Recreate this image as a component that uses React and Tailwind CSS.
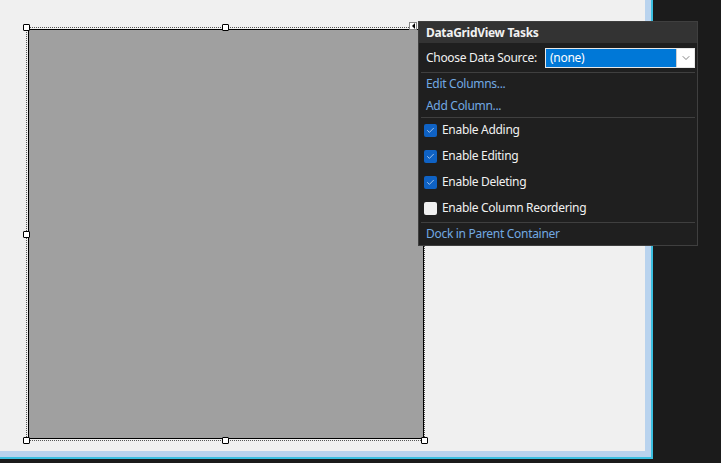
import { Check, ChevronDown } from "lucide-react";

const font = { fontFamily: '"Noto Sans", "Open Sans", sans-serif' };

function Handle({ className }) {
  return (
    <div
      className={`absolute h-[7px] w-[7px] rounded-[1px] border border-black bg-white ${className}`}
    />
  );
}

function Sep() {
  return <div className="mx-[2px] h-px bg-[#3f3f3f]" />;
}

function CheckRow({ label, checked }) {
  return (
    <div className="flex h-[22px] items-center gap-[5px] pl-[5px]">
      {checked ? (
        <div className="flex h-[13px] w-[13px] items-center justify-center rounded-[2px] bg-[#0f62c4]">
          <Check size={9} strokeWidth={2} className="text-[#cfe0f5]" />
        </div>
      ) : (
        <div className="h-[13px] w-[13px] rounded-[2px] bg-[#f0f0f0]" />
      )}
      <span className="text-[12px] tracking-[-0.3px] text-[#f1f1f1]">{label}</span>
    </div>
  );
}

export default function App() {
  return (
    <div className="relative h-[463px] w-[721px] overflow-hidden bg-[#1b1b1b]" style={font}>
      {/* designer form surface */}
      <div className="w-[653px] border-r-2 border-b-2 border-[#3bbfe0]">
        <div className="border-r-[6px] border-b-[6px] border-[#b9d3ee]">
          <div className="h-[451px] bg-[#f0f0f0] pt-[29px] pl-[28px]">
            <div className="h-[410px] w-[396px] border border-black bg-[#a0a0a0]" />
          </div>
        </div>
      </div>

      {/* selection frame */}
      <div className="absolute left-[26px] top-[27px] h-[414px] w-[399px] border border-dotted border-[#555]" />
      <Handle className="left-[23px] top-[24px]" />
      <Handle className="left-[222px] top-[24px]" />
      <Handle className="left-[23px] top-[231px]" />
      <Handle className="left-[23px] top-[437px]" />
      <Handle className="left-[222px] top-[437px]" />
      <Handle className="left-[421px] top-[437px]" />

      {/* smart tag glyph */}
      <div className="absolute left-[409px] top-[22px] flex h-[8px] w-[8px] items-center justify-center border border-[#888] bg-white">
        <div className="h-0 w-0 border-y-[3px] border-r-[3px] border-y-transparent border-r-black" />
      </div>

      {/* tasks panel */}
      <div className="absolute left-[418px] top-[21px] w-[280px] border border-[#3f3f3f] bg-[#1f1f1f] tracking-[-0.3px]">
        <div className="flex h-[21px] items-center bg-[#333333] pl-[7px] text-[12px] font-bold text-[#f1f1f1]">
          DataGridView Tasks
        </div>
        <div className="flex h-[29px] items-center justify-between pl-[7px] pr-[2px]">
          <span className="text-[12px] text-[#f1f1f1]">Choose Data Source:</span>
          <div className="flex h-[20px] w-[150px] border border-[#e8e8e8] bg-[#0078d7]">
            <span className="flex-1 pl-[4px] text-[12px] leading-[18px] text-white">(none)</span>
            <div className="flex w-[18px] items-center justify-center border-l border-[#cfcfcf] bg-white">
              <ChevronDown size={12} strokeWidth={1.4} className="text-[#505050]" />
            </div>
          </div>
        </div>
        <Sep />
        <div className="flex h-[22px] items-center pl-[7px] text-[12px] text-[#72a9e2]">Edit Columns...</div>
        <div className="flex h-[22px] items-center pl-[7px] text-[12px] text-[#72a9e2]">Add Column...</div>
        <Sep />
        <div className="flex flex-col gap-[4px] pt-[1px] pb-[3px]">
          <CheckRow label="Enable Adding" checked />
          <CheckRow label="Enable Editing" checked />
          <CheckRow label="Enable Deleting" checked />
          <CheckRow label="Enable Column Reordering" />
        </div>
        <Sep />
        <div className="flex h-[22px] items-center pl-[7px] text-[12px] text-[#72a9e2]">Dock in Parent Container</div>
      </div>
    </div>
  );
}
